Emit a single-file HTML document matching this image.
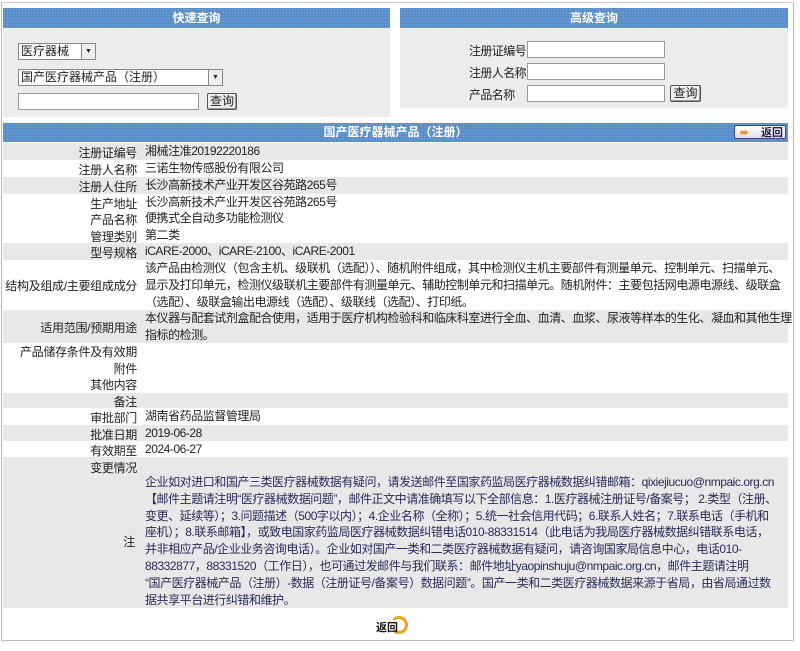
<!DOCTYPE html>
<html><head><meta charset="utf-8"><style>
body{margin:0;width:800px;height:651px;background:#fff;font-family:"Liberation Sans","Noto Sans CJK SC",sans-serif;font-size:12px;color:#222;position:relative;overflow:hidden}
.outer{position:absolute;left:1px;top:2px;width:791px;height:637px;border:1px solid #bbb;border-top:1px solid #ccc}
.abs{position:absolute}
.bar{background:#5b8fc9;background-image:radial-gradient(#7aa6d6 30%,transparent 31%);background-size:3px 3px;color:#fff;font-weight:bold;text-align:center;height:20px;line-height:20px;font-size:12px}
.panel{background:#ececec}
.row{position:absolute;left:3px;width:785px}
.g{background:#e8e8e8}
.lab{position:absolute;left:0;width:134px;text-align:right;white-space:nowrap;letter-spacing:-0.3px}
.val{position:absolute;left:142px;white-space:nowrap;line-height:16.8px;letter-spacing:-0.45px}
.btn{position:absolute;height:15px;border:1px solid #555;border-radius:2px;background:#eee;font-size:12px;line-height:15px;text-align:center;box-shadow:inset -1px -1px #999}
.sel{position:absolute;height:15px;border:1px solid #888;background:#fff;line-height:15px;padding-left:2px;white-space:nowrap}
.sel i{position:absolute;right:0;top:0;width:13px;height:15px;border-left:1px solid #888;background:#eee;font-style:normal;font-size:7px;text-align:center}
.note{color:#2a2a5a}
.sm{letter-spacing:-0.6px}
</style></head><body>
<div class="outer"></div>
<div class="abs panel" style="left:3px;top:8px;width:387px;height:109px"></div>
<div class="abs bar" style="left:3px;top:8px;width:387px">快速查询</div>
<div class="abs panel" style="left:400px;top:8px;width:388px;height:100px"></div>
<div class="abs bar" style="left:400px;top:8px;width:388px">高级查询</div>
<div class="sel" style="left:18px;top:43px;width:74px">医疗器械<i>▼</i></div>
<div class="sel" style="left:18px;top:69px;width:201px">国产医疗器械产品（注册）<i>▼</i></div>
<div class="abs" style="left:18px;top:93px;width:179px;height:15px;border:1px solid #999;background:#fff"></div>
<div class="btn" style="left:207px;top:93px;width:28px">查询</div>
<div class="abs sm" style="left:469px;top:42px">注册证编号</div>
<div class="abs sm" style="left:469px;top:64px">注册人名称</div>
<div class="abs sm" style="left:469px;top:86px">产品名称</div>
<div class="abs" style="left:527px;top:41px;width:136px;height:15px;border:1px solid #999;background:#fff"></div>
<div class="abs" style="left:527px;top:63px;width:136px;height:15px;border:1px solid #999;background:#fff"></div>
<div class="abs" style="left:527px;top:85px;width:136px;height:15px;border:1px solid #999;background:#fff"></div>
<div class="btn" style="left:670px;top:85px;width:29px">查询</div>

<div class="abs bar" style="left:3px;top:123px;width:785px;height:19px;line-height:19px">国产医疗器械产品（注册）</div>
<div class="abs" style="left:734px;top:125px;width:52px;height:14px;background:linear-gradient(#fff,#dde);border:1px solid #447;border-radius:2px;font-size:11px;font-weight:bold;color:#224;line-height:14px;text-align:right;padding-right:2px;box-sizing:border-box"><span style="color:#f29020;float:left;margin-left:5px">➨</span>返回</div>

<div class="row g" style="top:143px;height:17px"><span class="lab" style="top:1px">注册证编号</span><span class="val" style="top:0">湘械注准20192220186</span></div>
<div class="row" style="top:160px;height:17px"><span class="lab" style="top:1px">注册人名称</span><span class="val" style="top:0">三诺生物传感股份有限公司</span></div>
<div class="row g" style="top:177px;height:17px"><span class="lab" style="top:1px">注册人住所</span><span class="val" style="top:0">长沙高新技术产业开发区谷苑路265号</span></div>
<div class="row" style="top:194px;height:17px"><span class="lab" style="top:1px">生产地址</span><span class="val" style="top:0">长沙高新技术产业开发区谷苑路265号</span></div>
<div class="row" style="top:210px;height:17px"><span class="lab" style="top:1px">产品名称</span><span class="val" style="top:0">便携式全自动多功能检测仪</span></div>
<div class="row" style="top:227px;height:16px"><span class="lab" style="top:1px">管理类别</span><span class="val" style="top:0">第二类</span></div>
<div class="row g" style="top:243px;height:17px"><span class="lab" style="top:1px">型号规格</span><span class="val" style="top:0">iCARE-2000、iCARE-2100、iCARE-2001</span></div>
<div class="row" style="top:260px;height:50px"><span class="lab" style="top:17px">结构及组成/主要组成成分</span><span class="val" style="top:0">该产品由检测仪（包含主机、级联机（选配））、随机附件组成，其中检测仪主机主要部件有测量单元、控制单元、扫描单元、<br>显示及打印单元，检测仪级联机主要部件有测量单元、辅助控制单元和扫描单元。随机附件：主要包括网电源电源线、级联盒<br>（选配）、级联盒输出电源线（选配）、级联线（选配）、打印纸。</span></div>
<div class="row g" style="top:310px;height:33px"><span class="lab" style="top:9px">适用范围/预期用途</span><span class="val" style="top:0">本仪器与配套试剂盒配合使用，适用于医疗机构检验科和临床科室进行全血、血清、血浆、尿液等样本的生化、凝血和其他生理<br>指标的检测。</span></div>
<div class="row" style="top:343px;height:50px"><span class="lab" style="top:0">产品储存条件及有效期</span><span class="lab" style="top:17px">附件</span><span class="lab" style="top:33px">其他内容</span></div>
<div class="row g" style="top:393px;height:15px"><span class="lab" style="top:0">备注</span></div>
<div class="row" style="top:408px;height:17px"><span class="lab" style="top:1px">审批部门</span><span class="val" style="top:0">湖南省药品监督管理局</span></div>
<div class="row g" style="top:425px;height:16px"><span class="lab" style="top:1px">批准日期</span><span class="val" style="top:0">2019-06-28</span></div>
<div class="row" style="top:441px;height:16px"><span class="lab" style="top:1px">有效期至</span><span class="val" style="top:0">2024-06-27</span></div>
<div class="row g" style="top:457px;height:151px"><span class="lab" style="top:2px">变更情况</span><span class="lab" style="top:76px;width:132px">注</span><span class="val note" style="top:17px">企业如对进口和国产三类医疗器械数据有疑问，请发送邮件至国家药监局医疗器械数据纠错邮箱：qixiejiucuo@nmpaic.org.cn<br>【邮件主题请注明“医疗器械数据问题”，邮件正文中请准确填写以下全部信息：1.医疗器械注册证号/备案号； 2.类型（注册、<br>变更、延续等）；3.问题描述（500字以内）；4.企业名称（全称）；5.统一社会信用代码；6.联系人姓名；7.联系电话（手机和<br>座机）；8.联系邮箱】，或致电国家药监局医疗器械数据纠错电话010-88331514（此电话为我局医疗器械数据纠错联系电话，<br>并非相应产品/企业业务咨询电话）。企业如对国产一类和二类医疗器械数据有疑问，请咨询国家局信息中心，电话010-<br>88332877，88331520（工作日），也可通过发邮件与我们联系：邮件地址yaopinshuju@nmpaic.org.cn，邮件主题请注明<br>“国产医疗器械产品（注册）-数据（注册证号/备案号）数据问题”。国产一类和二类医疗器械数据来源于省局，由省局通过数<br>据共享平台进行纠错和维护。</span></div>
<div class="abs" style="left:376px;top:616px;width:36px;height:20px">
<div class="abs" style="left:14px;top:0;width:18px;height:18px;border:3px solid #f0a020;border-left-color:transparent;border-radius:50%;box-sizing:border-box"></div>
<span class="abs" style="left:0;top:3px;font-weight:bold;font-size:11px;color:#111">返回</span></div>
</body></html>
